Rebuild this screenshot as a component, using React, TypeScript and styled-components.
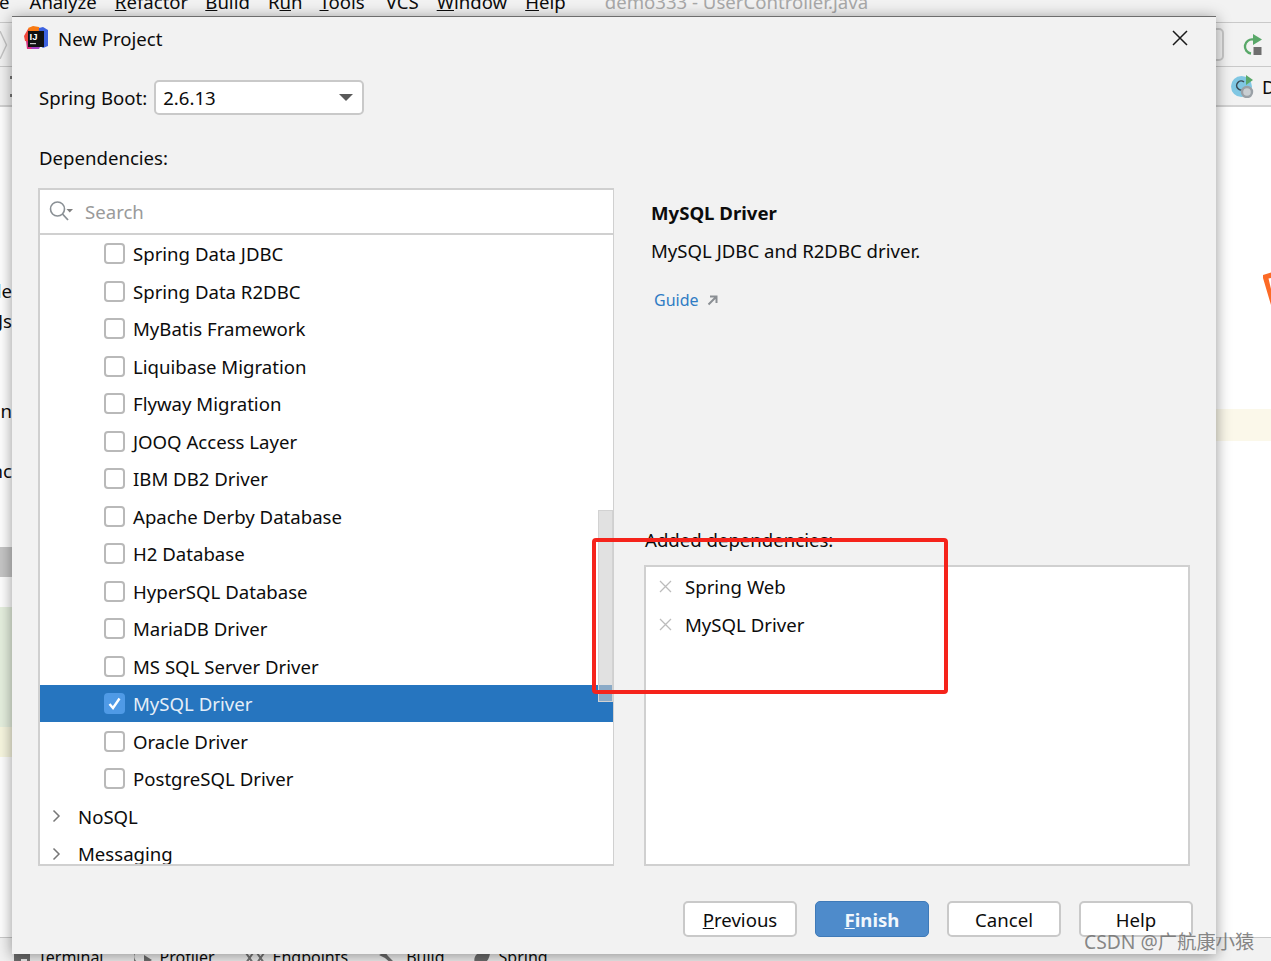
import styled, { createGlobalStyle } from 'styled-components';

const UI_FONT = '"Noto Sans", "Noto Sans CJK SC", sans-serif';

const GlobalStyle = createGlobalStyle`
    html, body {
        margin: 0;
        padding: 0;
        background: #ffffff;
    }
    * {
        box-sizing: border-box;
    }
`;

const Page = styled.div`
    position: relative;
    width: 1271px;
    height: 961px;
    overflow: hidden;
    display: flex;
    flex-direction: column;
    font-family: ${UI_FONT};
    font-size: 18.6px;
    color: #0c0c0c;
    background: #fff;
`;

/* IDE behind the dialog */
const MenuBar = styled.div`
    flex: none;
    height: 33px;
    margin-top: -10px;
    display: flex;
    align-items: center;
    background: #f2f2f2;
    border-bottom: 1px solid #c9c9c9;
`;

const MenuItem = styled.span<{ $left: number }>`
    margin-left: ${(p) => p.$left}px;
    white-space: nowrap;
    transform: translateY(-5px);
`;

const MenuTitle = styled(MenuItem)`
    color: #a8a8a8;
`;

const NavBar = styled.div`
    flex: none;
    height: 44px;
    display: flex;
    align-items: center;
    justify-content: space-between;
    padding-right: 8px;
    background: #f2f2f2;
    border-bottom: 1px solid #c9c9c9;
`;

const NavField = styled.div`
    width: 60px;
    height: 33px;
    margin-right: 19px;
    border: 2px solid #c9c9c9;
    border-radius: 5px;
`;

const NavRight = styled.div`
    display: flex;
    align-items: center;
`;

const TabBar = styled.div`
    flex: none;
    height: 40px;
    display: flex;
    align-items: center;
    justify-content: space-between;
    background: #f2f2f2;
    border-bottom: 2px solid #d2d2d2;
`;

const GripDots = styled.div`
    margin-left: 10px;
    display: flex;
    flex-direction: column;
    gap: 15px;
`;

const GripDot = styled.span`
    width: 3px;
    height: 3px;
    background: #777;
`;

const TabRight = styled.div`
    width: 40px;
    display: flex;
    align-items: center;
    gap: 7px;
    overflow: hidden;
`;

const Editor = styled.div`
    flex: 1;
    min-height: 0;
    display: flex;
    background: #fff;
`;

const ProjectPane = styled.div`
    flex: none;
    width: 12px;
    padding-top: 170px;
    display: flex;
    flex-direction: column;
`;

const ProjectRow = styled.div<{ $bg?: string }>`
    height: 30px;
    line-height: 28px;
    display: flex;
    justify-content: flex-end;
    overflow: hidden;
    white-space: nowrap;
    background: ${(p) => p.$bg ?? 'transparent'};
`;

const EditorMiddle = styled.div`
    flex: 1;
`;

const EditorGutter = styled.div`
    flex: none;
    width: 55px;
    padding-top: 165px;
    display: flex;
    flex-direction: column;
`;

const OrangeMark = styled.svg`
    align-self: flex-end;
    flex: none;
`;

const CaretStrip = styled.div`
    margin-top: 104px;
    height: 32px;
    background: #fbf8ea;
`;

const ToolStrip = styled.div`
    flex: none;
    height: 24px;
    display: flex;
    align-items: flex-end;
    overflow: hidden;
    background: #f2f2f2;
    border-top: 1px solid #c9c9c9;
`;

const ToolItem = styled.div<{ $left: number }>`
    position: relative;
    top: 7px;
    margin-left: ${(p) => p.$left}px;
    display: flex;
    align-items: center;
    gap: 8px;
    white-space: nowrap;
    font-size: 16px;
`;

const ToolGlyph = styled.svg`
    flex: none;
`;

/* Dialog */
const Dialog = styled.div`
    position: absolute;
    left: 12px;
    top: 16px;
    width: 1204px;
    height: 938px;
    display: flex;
    flex-direction: column;
    background: #f2f2f2;
    border-top: 1px solid #6d6d6d;
    box-shadow: 0 2px 14px rgba(0, 0, 0, 0.42);
`;

const TitleBar = styled.div`
    flex: none;
    height: 42px;
    padding: 0 28px 0 12px;
    display: flex;
    align-items: center;
    gap: 10px;
`;

const Title = styled.span`
    flex: 1;
`;

const CloseButton = styled.button`
    padding: 0;
    border: 0;
    background: none;
    display: flex;
`;

const Body = styled.div`
    flex: 1;
    min-height: 0;
    padding: 21px 26px 0 26px;
    display: flex;
    flex-direction: column;
`;

const BootRow = styled.div`
    flex: none;
    padding-left: 1px;
    display: flex;
    align-items: center;
    gap: 7px;
    height: 35px;
`;

const Select = styled.div`
    width: 210px;
    height: 35px;
    padding: 0 9px 0 7px;
    display: flex;
    align-items: center;
    justify-content: space-between;
    background: #fff;
    border: 2px solid #c9c9c9;
    border-radius: 5px;
`;

const SelectArrow = styled.span`
    width: 0;
    height: 0;
    border-left: 7px solid transparent;
    border-right: 7px solid transparent;
    border-top: 7px solid #5a5a5a;
`;

const SectionLabel = styled.div`
    flex: none;
    height: 24px;
    line-height: 24px;
    margin: 31px 0 18px 1px;
`;

const Main = styled.div`
    flex: none;
    height: 678px;
    display: grid;
    grid-template-columns: 576px 1fr;
    column-gap: 30px;
`;

const ListBox = styled.div`
    position: relative;
    display: flex;
    flex-direction: column;
    min-height: 0;
    overflow: hidden;
    background: #fff;
    border: 2px solid #d0d0d0;
    border-right-width: 1px;
`;

const SearchRow = styled.div`
    flex: none;
    height: 44.75px;
    padding-left: 8px;
    display: flex;
    align-items: center;
    gap: 10px;
    color: #9a9a9a;
    border-bottom: 2px solid #d0d0d0;
`;

const Tree = styled.div`
    flex: 1;
    min-height: 0;
    overflow: hidden;
`;

const TreeRow = styled.div<{ $selected?: boolean }>`
    height: 37.5px;
    padding-left: 64px;
    display: flex;
    align-items: center;
    gap: 8px;
    white-space: nowrap;
    color: ${(p) => (p.$selected ? '#e4eef8' : '#0c0c0c')};
    background: ${(p) => (p.$selected ? '#2675bf' : 'transparent')};
`;

const GroupRow = styled(TreeRow)`
    padding-left: 12px;
    gap: 17px;
`;

const CheckBox = styled.span<{ $checked?: boolean }>`
    flex: none;
    width: 21px;
    height: 21px;
    display: flex;
    align-items: center;
    justify-content: center;
    background: ${(p) => (p.$checked ? '#4f9ae6' : '#fff')};
    border: ${(p) => (p.$checked ? '0' : '2px solid #b9b9b9')};
    border-radius: 4px;
`;

const ScrollThumb = styled.div`
    position: absolute;
    right: 0;
    top: 320px;
    width: 15px;
    height: 192px;
    background: rgba(205, 205, 205, 0.6);
    border: 1px solid #d2d2d2;
`;

const Side = styled.div`
    display: flex;
    flex-direction: column;
    min-height: 0;
`;

const InfoName = styled.div`
    margin: 13px 0 0 7px;
    height: 24px;
    line-height: 24px;
    font-weight: 700;
`;

const InfoText = styled.div`
    margin: 14px 0 0 7px;
    height: 24px;
    line-height: 24px;
`;

const GuideLink = styled.div`
    margin: 25px 0 0 10px;
    height: 24px;
    display: flex;
    align-items: center;
    gap: 8px;
    font-size: 16px;
    color: #2f7cc4;
`;

const AddedLabel = styled.div`
    margin: auto 0 13px 1px;
    height: 24px;
    line-height: 24px;
`;

const AddedBox = styled.div`
    flex: none;
    height: 301px;
    padding: 0.75px 0 0 13px;
    background: #fff;
    border: 2px solid #d0d0d0;
`;

const AddedRow = styled.div`
    height: 37.5px;
    display: flex;
    align-items: center;
    gap: 13px;
    white-space: nowrap;
`;

const Footer = styled.div`
    flex: none;
    margin: 35px -3px 0 0;
    display: flex;
    justify-content: flex-end;
    gap: 18px;
`;

const Button = styled.button<{ $primary?: boolean }>`
    width: 114px;
    height: 36px;
    padding: 0;
    font-family: inherit;
    font-size: 18.6px;
    font-weight: ${(p) => (p.$primary ? 700 : 400)};
    color: ${(p) => (p.$primary ? '#f2f7fc' : '#0c0c0c')};
    background: ${(p) => (p.$primary ? '#4e8bcb' : '#fff')};
    border: ${(p) => (p.$primary ? '1px solid #3f7ab8' : '2px solid #c9c9c9')};
    border-radius: 5px;
`;

/* Annotation drawn on top of the screenshot */
const RedFrame = styled.div`
    position: absolute;
    left: 592px;
    top: 538px;
    width: 356px;
    height: 156px;
    border: 4px solid #f5231b;
    border-radius: 4px;
    pointer-events: none;
`;

const Watermark = styled.div`
    position: absolute;
    left: 1084px;
    top: 930px;
    font-size: 19.3px;
    line-height: 24px;
    white-space: nowrap;
    color: rgba(105, 105, 105, 0.8);
`;

const DEPENDENCIES = [
    'Spring Data JDBC',
    'Spring Data R2DBC',
    'MyBatis Framework',
    'Liquibase Migration',
    'Flyway Migration',
    'JOOQ Access Layer',
    'IBM DB2 Driver',
    'Apache Derby Database',
    'H2 Database',
    'HyperSQL Database',
    'MariaDB Driver',
    'MS SQL Server Driver',
    'MySQL Driver',
    'Oracle Driver',
    'PostgreSQL Driver',
];

const IdeaLogo = () => (
    <svg width="24" height="24" viewBox="0 0 24 24">
        <path d="M0 10 L4 3 L9 3 L6 16 L1 15 Z" fill="#f0483e" />
        <path d="M4 2 L9 0 L15 1 L17 5 L6 6 Z" fill="#f97a12" />
        <path d="M15 2 L19 1 L24 4 L24 20 L19 22 L14 18 Z" fill="#3c62e0" />
        <path d="M2 15 L7 15 L9 23 L3 23 Z" fill="#d9327f" />
        <path d="M6 19 L17 19 L15 23 L8 23 Z" fill="#a63ec5" />
        <rect x="4" y="5" width="16" height="16" fill="#111" />
        <text x="5.5" y="13.5" fontFamily="Liberation Sans, sans-serif" fontSize="9.5" fontWeight="700" fill="#fff">
            IJ
        </text>
        <rect x="6" y="17" width="6" height="1.2" fill="#c8c8c8" />
    </svg>
);

const CloseIcon = () => (
    <svg width="16" height="16" viewBox="0 0 16 16">
        <path d="M1 1 L15 15 M15 1 L1 15" stroke="#1a1a1a" strokeWidth="1.5" fill="none" />
    </svg>
);

const SearchIcon = () => (
    <svg width="27" height="22" viewBox="0 0 27 22">
        <circle cx="9.5" cy="9" r="7" stroke="#8a9095" strokeWidth="1.6" fill="none" />
        <path d="M14.5 14 L20 20" stroke="#8a9095" strokeWidth="1.8" />
        <path d="M18.5 9 L25 9 L21.75 12.5 Z" fill="#7f7f7f" />
    </svg>
);

const CheckMark = () => (
    <svg width="15" height="15" viewBox="0 0 15 15">
        <path d="M2.5 8 L6 12 L12.5 2.5" stroke="#fff" strokeWidth="2.4" fill="none" />
    </svg>
);

const Chevron = () => (
    <svg width="9" height="14" viewBox="0 0 9 14">
        <path d="M1.5 1.5 L7 7 L1.5 12.5" stroke="#777" strokeWidth="1.5" fill="none" />
    </svg>
);

const NavChevron = () => (
    <svg width="8" height="28" viewBox="0 0 8 28">
        <path d="M0 0 L6.5 14 L0 28" stroke="#c4c4c4" strokeWidth="1.4" fill="none" />
    </svg>
);

const RemoveIcon = () => (
    <svg width="13" height="13" viewBox="0 0 13 13">
        <path d="M1 1 L12 12 M12 1 L1 12" stroke="#bcbcbc" strokeWidth="1.3" fill="none" />
    </svg>
);

const ExternalArrow = () => (
    <svg width="11" height="11" viewBox="0 0 11 11">
        <path d="M1.5 9.5 L8.5 2.5 M3 1.5 L9.5 1.5 L9.5 8" stroke="#8b8f94" strokeWidth="2" fill="none" />
    </svg>
);

const RerunIcon = () => (
    <svg width="20" height="21" viewBox="0 0 20 21">
        <path d="M8 19.5 A7 7 0 0 1 10 5.5" stroke="#59a869" strokeWidth="2.4" fill="none" />
        <path d="M10 0 L19 5.5 L10 11 Z" fill="#59a869" />
        <rect x="10.5" y="13" width="8" height="8" fill="#6e6e6e" />
    </svg>
);

const SpringRunIcon = () => (
    <svg width="24" height="24" viewBox="0 0 24 24" style={{ flex: 'none' }}>
        <circle cx="10.5" cy="12.5" r="10.5" fill="#80c7e3" />
        <path d="M13 8 A4.5 4.5 0 1 0 13 15" stroke="#3a4a55" strokeWidth="1.6" fill="none" />
        <path d="M15 1 L22 6 L15 11 Z" fill="#59a869" />
        <circle cx="16" cy="18" r="5" stroke="#9aa0a6" strokeWidth="2.4" fill="#c9ced2" />
    </svg>
);

const TerminalGlyph = () => (
    <ToolGlyph width="16" height="16" viewBox="0 0 16 16">
        <rect x="0" y="2" width="16" height="14" fill="#6e6e6e" />
        <rect x="7" y="10" width="6" height="2" fill="#f2f2f2" />
    </ToolGlyph>
);

const ProfilerGlyph = () => (
    <ToolGlyph width="18" height="16" viewBox="0 0 18 16">
        <path d="M2 2 A7 7 0 0 0 9 14" stroke="#7d7d7d" strokeWidth="2" fill="none" />
        <path d="M10 6 L18 11 L10 16 Z" fill="#6e6e6e" />
    </ToolGlyph>
);

const EndpointsGlyph = () => (
    <ToolGlyph width="20" height="16" viewBox="0 0 20 16">
        <path d="M1 4 L8 14 M8 4 L1 14 M12 4 L19 14 M19 4 L12 14" stroke="#777" strokeWidth="2" fill="none" />
    </ToolGlyph>
);

const BuildGlyph = () => (
    <ToolGlyph width="20" height="16" viewBox="0 0 20 16">
        <path d="M1 6 L7 3 L10 7 L19 16 L15 16 L7 9 Z" fill="#6e6e6e" />
    </ToolGlyph>
);

const SpringGlyph = () => (
    <ToolGlyph width="18" height="16" viewBox="0 0 18 16">
        <path d="M17 0 C18 10 12 16 6 16 C1 16 0 10 3 6 C7 2 13 4 17 0 Z" fill="#6e6e6e" />
    </ToolGlyph>
);

const App = () => (
    <Page>
        <GlobalStyle />
        <MenuBar>
            <MenuItem $left={-1}>e</MenuItem>
            <MenuItem $left={20}>Analyze</MenuItem>
            <MenuItem $left={18}><u>R</u>efactor</MenuItem>
            <MenuItem $left={17}><u>B</u>uild</MenuItem>
            <MenuItem $left={18}>R<u>u</u>n</MenuItem>
            <MenuItem $left={17}><u>T</u>ools</MenuItem>
            <MenuItem $left={21}>VCS</MenuItem>
            <MenuItem $left={18}><u>W</u>indow</MenuItem>
            <MenuItem $left={18}><u>H</u>elp</MenuItem>
            <MenuTitle $left={39}>demo333 - UserController.java</MenuTitle>
        </MenuBar>
        <NavBar>
            <NavChevron />
            <NavRight>
                <NavField />
                <RerunIcon />
            </NavRight>
        </NavBar>
        <TabBar>
            <GripDots>
                <GripDot />
                <GripDot />
            </GripDots>
            <TabRight>
                <SpringRunIcon />
                <span>D</span>
            </TabRight>
        </TabBar>
        <Editor>
            <ProjectPane>
                <ProjectRow>lle</ProjectRow>
                <ProjectRow>Js</ProjectRow>
                <ProjectRow />
                <ProjectRow />
                <ProjectRow>n</ProjectRow>
                <ProjectRow />
                <ProjectRow>nc</ProjectRow>
                <ProjectRow />
                <ProjectRow />
                <ProjectRow $bg="#c6c6c6" />
                <ProjectRow />
                <ProjectRow $bg="#e6f0df" />
                <ProjectRow $bg="#e6f0df" />
                <ProjectRow $bg="#e6f0df" />
                <ProjectRow $bg="#e6f0df" />
                <ProjectRow $bg="#f8f7e0" />
            </ProjectPane>
            <EditorMiddle />
            <EditorGutter>
                <OrangeMark width="8" height="33" viewBox="0 0 8 33">
                    <path d="M0 3 L8 0.5 L8 6 L5.5 6.5 L8 17 L8 33 L0 6 Z" fill="#fc6a26" />
                </OrangeMark>
                <CaretStrip />
            </EditorGutter>
        </Editor>
        <ToolStrip>
            <ToolItem $left={14}><TerminalGlyph />Terminal</ToolItem>
            <ToolItem $left={30}><ProfilerGlyph />Profiler</ToolItem>
            <ToolItem $left={30}><EndpointsGlyph />Endpoints</ToolItem>
            <ToolItem $left={30}><BuildGlyph />Build</ToolItem>
            <ToolItem $left={28}><SpringGlyph />Spring</ToolItem>
        </ToolStrip>

        <Dialog>
            <TitleBar>
                <IdeaLogo />
                <Title>New Project</Title>
                <CloseButton><CloseIcon /></CloseButton>
            </TitleBar>
            <Body>
                <BootRow>
                    <span>Spring Boot:</span>
                    <Select>
                        <span>2.6.13</span>
                        <SelectArrow />
                    </Select>
                </BootRow>
                <SectionLabel>Dependencies:</SectionLabel>
                <Main>
                    <ListBox>
                        <SearchRow>
                            <SearchIcon />
                            <span>Search</span>
                        </SearchRow>
                        <Tree>
                            {DEPENDENCIES.map((name) => {
                                const selected = name === 'MySQL Driver';
                                return (
                                    <TreeRow key={name} $selected={selected}>
                                        <CheckBox $checked={selected}>{selected && <CheckMark />}</CheckBox>
                                        {name}
                                    </TreeRow>
                                );
                            })}
                            <GroupRow><Chevron />NoSQL</GroupRow>
                            <GroupRow><Chevron />Messaging</GroupRow>
                        </Tree>
                        <ScrollThumb />
                    </ListBox>
                    <Side>
                        <InfoName>MySQL Driver</InfoName>
                        <InfoText>MySQL JDBC and R2DBC driver.</InfoText>
                        <GuideLink>Guide <ExternalArrow /></GuideLink>
                        <AddedLabel>Added dependencies:</AddedLabel>
                        <AddedBox>
                            <AddedRow><RemoveIcon />Spring Web</AddedRow>
                            <AddedRow><RemoveIcon />MySQL Driver</AddedRow>
                        </AddedBox>
                    </Side>
                </Main>
                <Footer>
                    <Button><u>P</u>revious</Button>
                    <Button $primary><u>F</u>inish</Button>
                    <Button>Cancel</Button>
                    <Button>Help</Button>
                </Footer>
            </Body>
        </Dialog>
        <RedFrame />
        <Watermark>CSDN @广航康小猿</Watermark>
    </Page>
);

export default App;
